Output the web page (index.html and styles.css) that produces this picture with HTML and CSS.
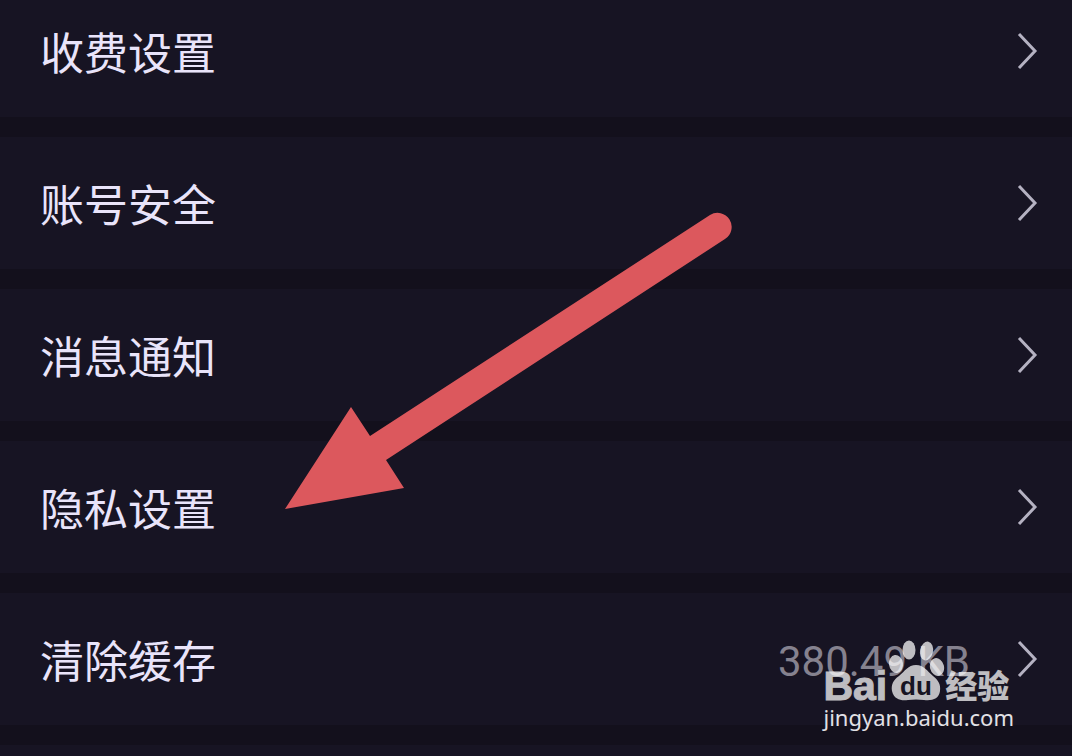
FILE: index.html
```html
<!DOCTYPE html>
<html lang="zh-CN">
<head>
<meta charset="utf-8">
<meta name="viewport" content="width=device-width, initial-scale=1">
<title>设置</title>
<link rel="stylesheet" href="styles.css">
</head>
<body>
<main class="screen">
  <nav class="settings">
    <a class="row" href="#billing"><span class="label">收费设置</span><svg class="chevron" viewBox="0 0 22 40" aria-hidden="true"><path d="M3 3 19 20 3 37"/></svg></a>
    <a class="row" href="#account"><span class="label">账号安全</span><svg class="chevron" viewBox="0 0 22 40" aria-hidden="true"><path d="M3 3 19 20 3 37"/></svg></a>
    <a class="row" href="#messages"><span class="label">消息通知</span><svg class="chevron" viewBox="0 0 22 40" aria-hidden="true"><path d="M3 3 19 20 3 37"/></svg></a>
    <a class="row" href="#privacy"><span class="label">隐私设置</span><svg class="chevron" viewBox="0 0 22 40" aria-hidden="true"><path d="M3 3 19 20 3 37"/></svg></a>
    <a class="row" href="#cache"><span class="label">清除缓存</span><span class="value">380.49 KB</span><svg class="chevron" viewBox="0 0 22 40" aria-hidden="true"><path d="M3 3 19 20 3 37"/></svg></a>
    <div class="row"></div>
  </nav>

  <svg class="pointer" viewBox="0 0 448 298" aria-hidden="true">
    <path d="M0 299 66 197 85 226 425 5A14 14 0 0 1 440 29L101 250 119 278Z"/>
  </svg>

  <div class="watermark">
    <div class="brand">
      <span class="brand-latin">Bai</span>
      <svg class="paw" viewBox="0 0 58 62" role="img" aria-label="du">
        <ellipse cx="9" cy="25" rx="7" ry="9" transform="rotate(-8 9 25)"/>
        <ellipse cx="22" cy="11" rx="6.5" ry="9.5"/>
        <ellipse cx="39.5" cy="12" rx="6.5" ry="9.5" transform="rotate(12 39.5 12)"/>
        <ellipse cx="50" cy="28" rx="7" ry="9" transform="rotate(-14 50 28)"/>
        <path d="M29 26C21 26 18 32 12 37C6 41 4 46 5 52C7 61 15 62 21 61Q29 60 37 61C45 62 52 60 53 52C54 45 51 41 46 37C40 32 37 26 29 26Z"/>
        <text class="paw-text" x="29" y="56">du</text>
      </svg>
      <span class="brand-cn">经验</span>
    </div>
    <div class="site">jingyan.baidu.com</div>
  </div>
</main>
</body>
</html>
```
FILE: styles.css
```css
* {
  box-sizing: border-box;
}

body {
  margin: 0;
  background: #13101c;
  font-family: Roboto, "Noto Sans CJK SC", sans-serif;
}

.screen {
  position: relative;
  height: 100vh;
  overflow: hidden;
}

/* The list is scrolled a little, so its first row starts above the window. */
.settings {
  display: flex;
  flex-direction: column;
  gap: 20px;
  margin-top: -15px;
}

.row {
  display: flex;
  align-items: center;
  flex-shrink: 0;
  height: 132px;
  padding: 0 34px 0 40px;
  background: #171423;
  color: #e9e4fa;
  text-decoration: none;
}

.label {
  flex: 1;
  font-family: "Noto Sans CJK SC", sans-serif;
  font-size: 44px;
  line-height: 64px;
}

.value {
  margin-right: 46px;
  padding-top: 6px;
  color: #85828f;
  font-size: 42px;
  line-height: 48px;
}

.chevron {
  width: 22px;
  height: 40px;
  fill: none;
  stroke: #b5b2c2;
  stroke-width: 3;
}

.pointer {
  position: absolute;
  top: 210px;
  left: 285px;
  width: 448px;
  height: 298px;
  overflow: visible;
  fill: #dc585d;
}

.watermark {
  position: absolute;
  right: 58px;
  bottom: 23px;
  color: #fff;
}

.brand {
  display: flex;
  align-items: flex-end;
  opacity: 0.72;
}

.brand-latin {
  font: bold 41px/30px "Liberation Sans", sans-serif;
  -webkit-text-stroke: 1px #fff;
}

.paw {
  flex-shrink: 0;
  width: 58px;
  height: 62px;
  fill: #fff;
}

.paw-text {
  fill: #171423;
  font: bold 26px "Liberation Sans", sans-serif;
  text-anchor: middle;
}

.brand-cn {
  font: 900 32px/34px "Noto Sans CJK SC", sans-serif;
}

.site {
  color: #e2e1e6;
  font: 400 22px/32px "Noto Sans", sans-serif;
}
```
